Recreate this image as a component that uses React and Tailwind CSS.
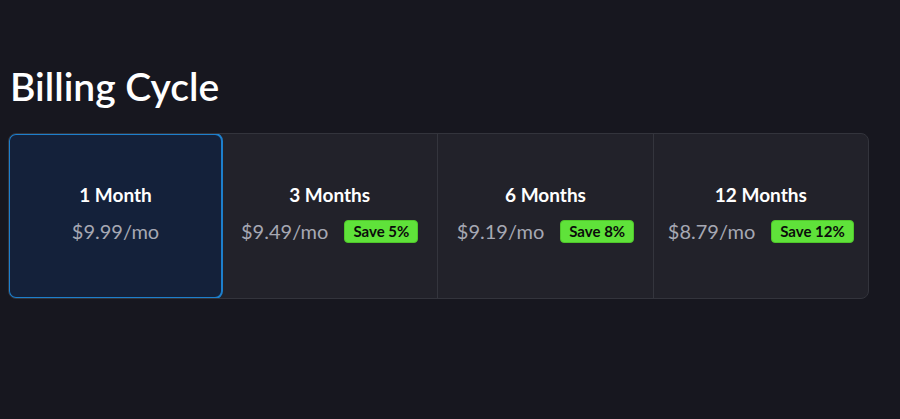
import React from 'react';

const plans = [
  { label: '1 Month', price: '$9.99/mo' },
  { label: '3 Months', price: '$9.49/mo', save: 'Save 5%' },
  { label: '6 Months', price: '$9.19/mo', save: 'Save 8%' },
  { label: '12 Months', price: '$8.79/mo', save: 'Save 12%' },
];

export default function App() {
  const selected = 0;

  return (
    <div className="min-h-screen w-full bg-[#17171f] pl-2 pr-8 pt-[63px]" style={{ fontFamily: 'Lato, "Noto Sans", sans-serif' }}>
      <h1 className="pl-[2px] text-[39px] font-semibold leading-[46px] text-white">Billing Cycle</h1>

      <div className="mt-[24px] grid h-[166px] w-[861px] grid-cols-[213px_1fr_1fr_1fr] overflow-hidden rounded-lg border border-[#33343c] bg-[#22222a]">
        {plans.map((p, i) => {
          const active = i === selected;
          return (
            <button
              key={p.label}
              className={
                active
                  ? '-m-px flex flex-col items-center justify-center rounded-lg border-2 border-[#1d7fcc] bg-[#14213a] pb-[6px]'
                  : 'flex flex-col items-center justify-center pb-[6px] ' + (i === 1 ? '' : 'border-l border-[#34353d]')
              }
            >
              <span className="text-[19px] font-bold leading-6 text-white">{p.label}</span>
              <div className="mt-[12px] flex items-center gap-4">
                <span className="text-[20px] leading-6 text-[#a6a8b3]">{p.price}</span>
                {p.save && (
                  <span className="rounded-[4px] border border-[#4fc62a] bg-[#5fe23a] px-[8px] py-[1px] text-[15px] font-bold leading-[19px] text-[#0b0b0b]">
                    {p.save}
                  </span>
                )}
              </div>
            </button>
          );
        })}
      </div>
    </div>
  );
}
